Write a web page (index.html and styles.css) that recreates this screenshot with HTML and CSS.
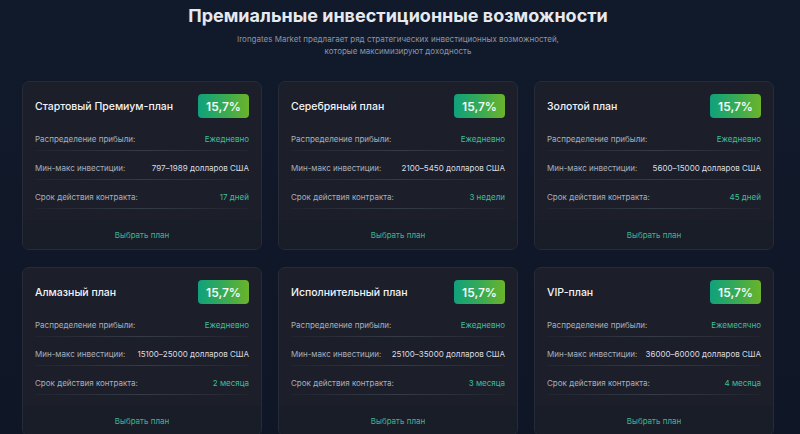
FILE: index.html
```html
<!DOCTYPE html>
<html lang="ru">
<head>
<meta charset="utf-8">
<link rel="stylesheet" href="styles.css">
</head>
<body>
<section class="plans">
  <h1 class="plans-title">Премиальные инвестиционные возможности</h1>
  <p class="plans-sub">Irongates Market предлагает ряд стратегических инвестиционных возможностей,<br>которые максимизируют доходность</p>
  <div class="grid">
    <div class="card">
      <div class="card-head"><span class="card-name">Стартовый Премиум-план</span><span class="badge">15,7%</span></div>
      <div class="rows">
        <div class="row"><span class="label">Распределение прибыли:</span><span class="val accent">Ежедневно</span></div>
        <div class="row"><span class="label">Мин-макс инвестиции:</span><span class="val">797–1989 долларов США</span></div>
        <div class="row"><span class="label">Срок действия контракта:</span><span class="val accent">17 дней</span></div>
      </div>
      <div class="card-foot">Выбрать план</div>
    </div>
    <div class="card">
      <div class="card-head"><span class="card-name">Серебряный план</span><span class="badge">15,7%</span></div>
      <div class="rows">
        <div class="row"><span class="label">Распределение прибыли:</span><span class="val accent">Ежедневно</span></div>
        <div class="row"><span class="label">Мин-макс инвестиции:</span><span class="val">2100–5450 долларов США</span></div>
        <div class="row"><span class="label">Срок действия контракта:</span><span class="val accent">3 недели</span></div>
      </div>
      <div class="card-foot">Выбрать план</div>
    </div>
    <div class="card">
      <div class="card-head"><span class="card-name">Золотой план</span><span class="badge">15,7%</span></div>
      <div class="rows">
        <div class="row"><span class="label">Распределение прибыли:</span><span class="val accent">Ежедневно</span></div>
        <div class="row"><span class="label">Мин-макс инвестиции:</span><span class="val">5600–15000 долларов США</span></div>
        <div class="row"><span class="label">Срок действия контракта:</span><span class="val accent">45 дней</span></div>
      </div>
      <div class="card-foot">Выбрать план</div>
    </div>
    <div class="card">
      <div class="card-head"><span class="card-name">Алмазный план</span><span class="badge">15,7%</span></div>
      <div class="rows">
        <div class="row"><span class="label">Распределение прибыли:</span><span class="val accent">Ежедневно</span></div>
        <div class="row"><span class="label">Мин-макс инвестиции:</span><span class="val">15100–25000 долларов США</span></div>
        <div class="row"><span class="label">Срок действия контракта:</span><span class="val accent">2 месяца</span></div>
      </div>
      <div class="card-foot">Выбрать план</div>
    </div>
    <div class="card">
      <div class="card-head"><span class="card-name">Исполнительный план</span><span class="badge">15,7%</span></div>
      <div class="rows">
        <div class="row"><span class="label">Распределение прибыли:</span><span class="val accent">Ежедневно</span></div>
        <div class="row"><span class="label">Мин-макс инвестиции:</span><span class="val">25100–35000 долларов США</span></div>
        <div class="row"><span class="label">Срок действия контракта:</span><span class="val accent">3 месяца</span></div>
      </div>
      <div class="card-foot">Выбрать план</div>
    </div>
    <div class="card">
      <div class="card-head"><span class="card-name">VIP-план</span><span class="badge">15,7%</span></div>
      <div class="rows">
        <div class="row"><span class="label">Распределение прибыли:</span><span class="val accent">Ежемесячно</span></div>
        <div class="row"><span class="label">Мин-макс инвестиции:</span><span class="val">36000–60000 долларов США</span></div>
        <div class="row"><span class="label">Срок действия контракта:</span><span class="val accent">4 месяца</span></div>
      </div>
      <div class="card-foot">Выбрать план</div>
    </div>
  </div>
</section>
</body>
</html>
```
FILE: styles.css
```css
* { box-sizing: border-box; }
html, body { margin: 0; padding: 0; }
body {
  background: linear-gradient(180deg, #111a2b 0%, #0f1626 100%);
  font-family: Inter, "Noto Sans", sans-serif;
  color: #e8eaf0;
  min-height: 434px;
}
.plans {
  padding: 3px 26px 0 22px;
}
.plans-title {
  margin: 0;
  text-align: center;
  font-size: 18px;
  line-height: 26px;
  font-weight: 700;
  color: #e6e9f0;
}
.plans-sub {
  margin: 4px 0 0;
  text-align: center;
  font-size: 8px;
  line-height: 12px;
  color: #8d95a5;
}
.grid {
  margin-top: 24px;
  display: grid;
  grid-template-columns: repeat(3, 240px);
  column-gap: 16px;
  row-gap: 17px;
}
.card {
  background: #1c1f2a;
  border: 1px solid #272b37;
  border-radius: 7px;
  overflow: hidden;
}
.card-head {
  display: flex;
  justify-content: space-between;
  align-items: center;
  padding: 12px 12px 0 12px;
}
.card-name {
  font-size: 10.5px;
  font-weight: 500;
  color: #f1f3f7;
  white-space: nowrap;
}
.badge {
  width: 51px;
  height: 24px;
  display: flex;
  align-items: center;
  justify-content: center;
  border-radius: 4px;
  background: linear-gradient(90deg, #10a17c 0%, #3aab52 55%, #6cb32a 100%);
  font-size: 12px;
  font-weight: 600;
  color: #f4fbf4;
}
.rows {
  padding: 4px 12px 11px;
}
.row {
  display: flex;
  justify-content: space-between;
  align-items: center;
  padding: 12px 0 5px;
  line-height: 11px;
  font-size: 8px;
  white-space: nowrap;
  border-bottom: 1px solid transparent;
  border-image: linear-gradient(90deg, rgba(60,66,80,0.15), rgba(60,66,80,0.8) 50%, rgba(60,66,80,0.15)) 1;
}
.label { color: #a9afbb; }
.val { color: #d9dce3; }
.accent { color: #3dbf9b; }
.card-foot {
  height: 29px;
  display: flex;
  align-items: center;
  justify-content: center;
  background: #191d28;
  font-size: 8px;
  color: #3bb796;
}
```
